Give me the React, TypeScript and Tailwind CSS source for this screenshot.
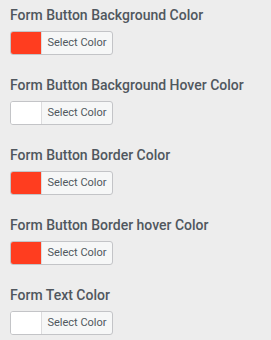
import React from "react";

const items = [
  { label: "Form Button Background Color", color: "#ff3d1f" },
  { label: "Form Button Background Hover Color", color: "#ffffff" },
  { label: "Form Button Border Color", color: "#ff3d1f" },
  { label: "Form Button Border hover Color", color: "#ff3d1f" },
  { label: "Form Text Color", color: "#ffffff" },
];

export default function App() {
  return (
    <div
      className="w-[271px] h-[340px] bg-[#ededed] px-[10px] pt-[6px] flex flex-col gap-[21px]"
      style={{ fontFamily: "Roboto, 'Noto Sans', sans-serif" }}
    >
      {items.map((it) => (
        <div key={it.label} className="flex flex-col gap-[7px]">
          <div className="text-[14px] leading-[18px] font-medium text-[#50575e]">{it.label}</div>
          <div className="flex w-[103px] h-[24px] border border-[#c3c4c7] rounded-[3px] bg-[#f6f7f7] overflow-hidden">
            <div className="w-[30px] h-full" style={{ backgroundColor: it.color }} />
            <div className="flex-1 border-l border-[#dcdcde] flex items-center justify-center text-[11px] text-[#50575e]">
              Select Color
            </div>
          </div>
        </div>
      ))}
    </div>
  );
}
